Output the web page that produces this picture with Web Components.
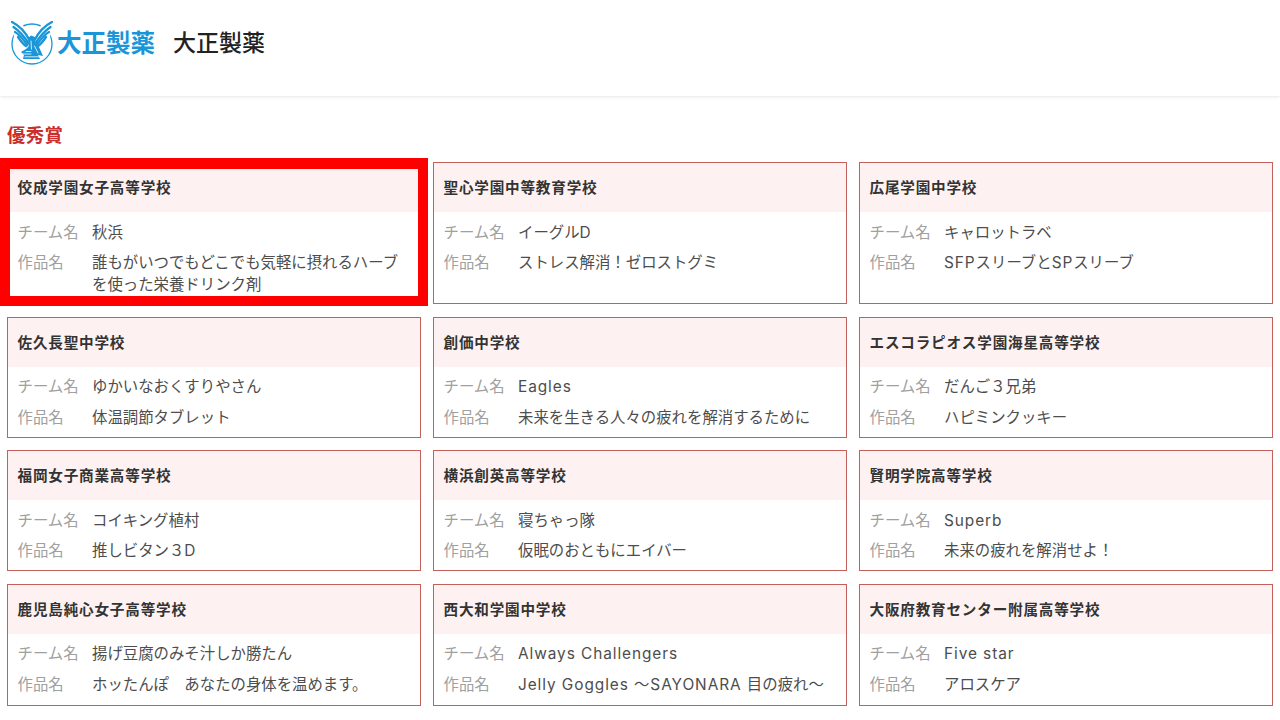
<!DOCTYPE html>
<html lang="ja">
<head>
<meta charset="utf-8">
<title>大正製薬</title>
<style>
	html, body { margin: 0; padding: 0; background: #fff; }
	body { font-family: Inter, "Noto Sans CJK JP", sans-serif; color: #333; overflow: hidden; }
	.en { letter-spacing: .93px; }
</style>
</head>
<body>
<site-header>大正製薬</site-header>
<award-section heading="優秀賞">
	<entry-card school="佼成学園女子高等学校" highlighted><span slot="team">秋浜</span>誰もがいつでもどこでも気軽に摂れるハーブを使った栄養ドリンク剤</entry-card>
	<entry-card school="聖心学園中等教育学校"><span slot="team">イーグル<span class="en">D</span></span>ストレス解消！ゼロストグミ</entry-card>
	<entry-card school="広尾学園中学校"><span slot="team">キャロットラベ</span><span class="en">SFP</span>スリーブと<span class="en">SP</span>スリーブ</entry-card>
	<entry-card school="佐久長聖中学校"><span slot="team">ゆかいなおくすりやさん</span>体温調節タブレット</entry-card>
	<entry-card school="創価中学校"><span slot="team" class="en">Eagles</span>未来を生きる人々の疲れを解消するために</entry-card>
	<entry-card school="エスコラピオス学園海星高等学校"><span slot="team">だんご３兄弟</span>ハピミンクッキー</entry-card>
	<entry-card school="福岡女子商業高等学校"><span slot="team">コイキング植村</span>推しビタン３D</entry-card>
	<entry-card school="横浜創英高等学校"><span slot="team">寝ちゃっ隊</span>仮眠のおともにエイバー</entry-card>
	<entry-card school="賢明学院高等学校"><span slot="team" class="en">Superb</span>未来の疲れを解消せよ！</entry-card>
	<entry-card school="鹿児島純心女子高等学校"><span slot="team">揚げ豆腐のみそ汁しか勝たん</span>ホッたんぽ　あなたの身体を温めます。</entry-card>
	<entry-card school="西大和学園中学校"><span slot="team" class="en">Always Challengers</span><span class="en">Jelly Goggles ～SAYONARA </span>目の疲れ～</entry-card>
	<entry-card school="大阪府教育センター附属高等学校"><span slot="team" class="en">Five star</span>アロスケア</entry-card>
</award-section>

<script>
(function() {
	const headerTemplate = document.createElement("template");
	headerTemplate.innerHTML = `
		<style>
		:host {
			display: flex;
			align-items: center;
			height: 96px;
			padding: 0 0 11px 10px;
			box-sizing: border-box;
			background: #fff;
			box-shadow: 0 1px 3px rgba(0,0,0,.1);
		}
		svg { display: block; width: 44px; height: 44px; }
		.mark { display: flex; align-items: center; gap: 3px; color: #1a96d8; }
		.word { font: 700 24.5px/1 "Noto Sans CJK JP", sans-serif; }
		.name { margin-left: 18px; margin-top: -2px; font: 500 23px/1 "Noto Sans CJK JP", sans-serif; color: #222; }
		</style>
		<div class="mark">
			<svg viewBox="0 0 44 44" fill="none" stroke="#1a96d8" stroke-linecap="round">
				<circle cx="22" cy="23" r="20" stroke-width="1.3"/>
				<path fill="#fff" stroke="none" d="M0 0 L12 3 L20 14 L24 14 L32 3 L44 0 L40 16 L4 16 Z"/>
				<g stroke-width="2.3">
					<path d="M2 1 C8 4 15 10 20 20"/>
					<path d="M3.5 6 C8 9 13 14 18.5 22"/>
					<path d="M5 11 C9 13 13 18 17.5 24"/>
					<path d="M8 16 C10 19 13 23 16 25"/>
					<path d="M42 1 C36 4 29 10 24 20"/>
					<path d="M40.5 6 C36 9 31 14 25.5 22"/>
					<path d="M39 11 C35 13 31 18 26.5 24"/>
					<path d="M36 16 C34 19 31 23 28 25"/>
				</g>
				<path fill="#1a96d8" stroke="none" d="M18 17 L21 14.5 L25 16 L25 22 L29 26 L33 35 L28 34 L30 38 L13 38 L14 34 L11 31 L16 28 L19 25 Z"/>
				<path stroke="#fff" stroke-width=".8" d="M12.5 33 H21 M15 35.8 H29 M21 20 L21.5 28 M24.5 25 L28 32 M16 30.5 H21"/>
			</svg>
			<span class="word">大正製薬</span>
		</div>
		<span class="name"><slot></slot></span>
	`;

	class SiteHeader extends HTMLElement {
		constructor() {
			super();
			this.attachShadow({mode: "open"}).appendChild(headerTemplate.content.cloneNode(true));
		}
	}
	customElements.define("site-header", SiteHeader);

	const sectionTemplate = document.createElement("template");
	sectionTemplate.innerHTML = `
		<style>
		:host { display: block; padding: 26px 7px 0; }
		h2 {
			margin: 0 0 16px;
			font: 700 18.4px/24px "Noto Sans CJK JP", sans-serif;
			color: #c9302c;
			letter-spacing: .3px;
		}
		.grid {
			display: grid;
			grid-template-columns: repeat(3, 414px);
			grid-template-rows: 142px 121px 121px 122px;
			column-gap: 12px;
			row-gap: 12.5px;
		}
		</style>
		<h2 id="heading"></h2>
		<div class="grid"><slot></slot></div>
	`;

	class AwardSection extends HTMLElement {
		constructor() {
			super();
			this.attachShadow({mode: "open"}).appendChild(sectionTemplate.content.cloneNode(true));
		}
		connectedCallback() {
			this.shadowRoot.getElementById("heading").textContent = this.getAttribute("heading");
		}
	}
	customElements.define("award-section", AwardSection);

	const cardTemplate = document.createElement("template");
	cardTemplate.innerHTML = `
		<style>
		:host {
			display: block;
			position: relative;
			box-sizing: border-box;
			border: 1px solid #c4605c;
			font: 400 15.4px/22px Inter, "Noto Sans CJK JP", sans-serif;
		}
		.school {
			display: flex;
			align-items: center;
			height: 49px;
			padding: 1px 9.5px 0;
			box-sizing: border-box;
			background: #fdf2f1;
			font-size: 14.6px;
			font-weight: 700;
			letter-spacing: .8px;
			color: #333;
		}
		dl { margin: 0; padding: 9.6px 9.5px 0; }
		.row { display: flex; margin-bottom: 8.8px; }
		.row:last-child { margin-bottom: 0; }
		dt { flex: 0 0 74.5px; color: #a0a0a0; }
		dd { margin: 0; flex: 1; color: #4d4d4d; padding-right: 10px; }
		.mark {
			display: none;
			position: absolute;
			left: -8px; right: -8px; top: -5px; bottom: -3px;
			border: solid #f00;
			border-width: 11px 10px 10px 10px;
			pointer-events: none;
		}
		:host([highlighted]) .mark { display: block; }
		</style>
		<div class="school" id="school"></div>
		<dl>
			<div class="row"><dt>チーム名</dt><dd><slot name="team"></slot></dd></div>
			<div class="row"><dt>作品名</dt><dd><slot></slot></dd></div>
		</dl>
		<div class="mark"></div>
	`;

	class EntryCard extends HTMLElement {
		constructor() {
			super();
			this.attachShadow({mode: "open"}).appendChild(cardTemplate.content.cloneNode(true));
		}
		connectedCallback() {
			this.shadowRoot.getElementById("school").textContent = this.getAttribute("school");
		}
	}
	customElements.define("entry-card", EntryCard);
})();
</script>
</body>
</html>
